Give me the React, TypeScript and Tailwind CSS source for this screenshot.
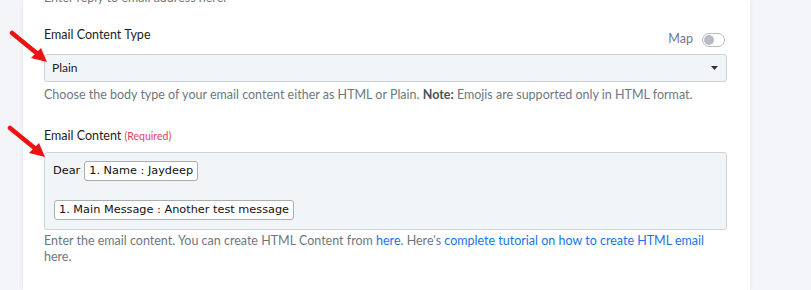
import React from "react";

const Arrow = ({ className }: { className?: string }) => (
  <svg className={className} width="44" height="36" viewBox="0 0 44 36">
    <line x1="3" y1="3" x2="30" y2="25" stroke="#ee1111" strokeWidth="4.5" strokeLinecap="round" />
    <polygon points="38,32 22,28 32,18" fill="#ee1111" />
  </svg>
);

export default function App() {
  return (
    <div
      className="relative w-[811px] h-[290px] overflow-hidden bg-[#f3f5f8] flex"
      style={{ fontFamily: "Lato, 'Open Sans', sans-serif" }}
    >
      <div className="ml-[23px] w-[727px] h-full bg-white shadow-[0_0_4px_rgba(0,0,0,0.08)] pl-[21px] pr-[23px]">
        <div className="-mt-[11px] text-[12.5px] leading-[18px] text-[#777]">Enter reply to email address here.</div>

        <div className="mt-[19px] flex items-end justify-between">
          <div className="text-[12.5px] leading-[18px] text-[#1d1d1d]">Email Content Type</div>
          <div className="flex items-center gap-[9px] mb-[-5px] mr-[2px]">
            <span className="text-[12.5px] text-[#6c7a89]">Map</span>
            <div className="w-[23px] h-[14px] rounded-full border border-[#b6bcc3] bg-white flex items-center px-[1px]">
              <div className="w-[10px] h-[10px] rounded-full bg-[#b6bcc3]" />
            </div>
          </div>
        </div>

        <div className="mt-[10px] h-[28px] rounded-[3px] border border-[#cfd4da] bg-[#f2f5f8] flex items-center justify-between pl-[7px] pr-[8px]">
          <span className="text-[12px] text-[#222]">Plain</span>
          <svg width="7" height="4" viewBox="0 0 7 4"><polygon points="0,0 7,0 3.5,4" fill="#333" /></svg>
        </div>

        <div className="mt-[4px] text-[12.5px] leading-[18px] text-[#6e7780]">
          Choose the body type of your email content either as HTML or Plain. <b className="text-[#4a5259]">Note:</b> Emojis are supported only in HTML format.
        </div>

        <div className="mt-[23px] text-[12.5px] leading-[18px] text-[#1d1d1d]">
          Email Content <span className="text-[10.5px] text-[#e0435a]">(Required)</span>
        </div>

        <div
          className="mt-[7px] h-[78px] rounded-[3px] border border-[#cfd4da] bg-[#f2f5f8] pl-[8px] pt-[8px] text-[11.3px] text-[#111]"
          style={{ fontFamily: "'DejaVu Sans', Verdana, sans-serif" }}
        >
          <div className="flex items-center gap-[4px]">
            <span>Dear</span>
            <span className="inline-block h-[20px] leading-[18px] px-[4px] rounded-[3px] border border-[#a9aeb3] bg-white">1. Name : Jaydeep</span>
          </div>
          <div className="mt-[19px] flex">
            <span className="inline-block h-[20px] leading-[18px] px-[4px] rounded-[3px] border border-[#a9aeb3] bg-white ml-[1px]">1. Main Message : Another test message</span>
          </div>
        </div>

        <div className="mt-[3px] text-[12.5px] leading-[16px] text-[#6e7780]">
          Enter the email content. You can create HTML Content from <span className="text-[#1a73e8]">here</span>. Here's{" "}
          <span className="text-[#1a73e8]">complete tutorial on how to create HTML email</span> here.
        </div>
      </div>

      <Arrow className="absolute left-[9px] top-[30px]" />
      <Arrow className="absolute left-[7px] top-[125px]" />
    </div>
  );
}
